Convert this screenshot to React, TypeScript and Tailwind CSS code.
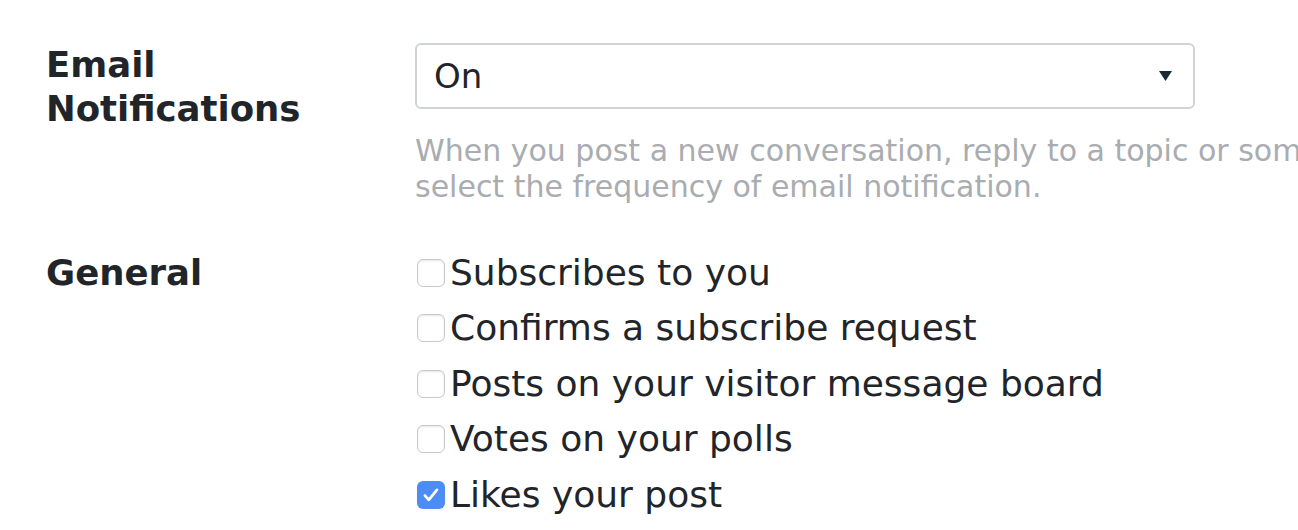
import React from 'react'

const options = [
  { label: 'Subscribes to you', checked: false },
  { label: 'Confirms a subscribe request', checked: false },
  { label: 'Posts on your visitor message board', checked: false },
  { label: 'Votes on your polls', checked: false },
  { label: 'Likes your post', checked: true },
]

function Box({ checked }: { checked: boolean }) {
  if (checked) {
    return (
      <span className="flex h-[28px] w-[28px] shrink-0 items-center justify-center rounded-[6px] bg-[#4d8bf5]">
        <svg width="22" height="22" viewBox="0 0 16 16" fill="none">
          <path d="M3.6 8.4l2.8 3.1 5.9-7.2" stroke="white" strokeWidth="2" strokeLinecap="round" strokeLinejoin="round" />
        </svg>
      </span>
    )
  }
  return (
    <span className="h-[28px] w-[28px] shrink-0 rounded-[6px] border-[1.5px] border-[#c9c9c9] bg-white shadow-[inset_0_1px_2px_rgba(0,0,0,0.1)]" />
  )
}

export default function App() {
  return (
    <div className="h-[530px] w-[1298px] overflow-hidden bg-white text-[#212529] [font-family:'DejaVu_Sans',Verdana,sans-serif]">
      <div className="pl-[46px] pt-[43px]">
        {/* Email notifications */}
        <div className="flex">
          <div className="w-[369px] shrink-0 text-[35.5px] font-bold leading-[44px]">
            Email
            <br />
            Notifications
          </div>
          <div className="shrink-0">
            <div className="flex h-[66px] w-[780px] items-center justify-between rounded-[6px] border-2 border-[#d1d4d7] pl-[17px] pr-[21px] text-[34px]">
              <span>On</span>
              <svg width="13" height="10" viewBox="0 0 13 10">
                <path d="M0 0h13L6.5 10z" fill="#172a36" />
              </svg>
            </div>
            <p className="mt-[24px] w-[883px] overflow-hidden whitespace-nowrap text-[30px] leading-[36px] text-[#a9acb0]">
              When you post a new conversation, reply to a topic or som
              <br />
              select the frequency of email notification.
            </p>
          </div>
        </div>

        {/* General */}
        <div className="mt-[40px] flex">
          <div className="w-[369px] shrink-0 text-[35.5px] font-bold leading-[55.5px]">General</div>
          <div className="flex flex-col">
            {options.map((o) => (
              <label key={o.label} className="flex h-[55.5px] items-center gap-[5px] pl-[2px] text-[36px] whitespace-nowrap">
                <Box checked={o.checked} />
                <span>{o.label}</span>
              </label>
            ))}
          </div>
        </div>
      </div>
    </div>
  )
}
